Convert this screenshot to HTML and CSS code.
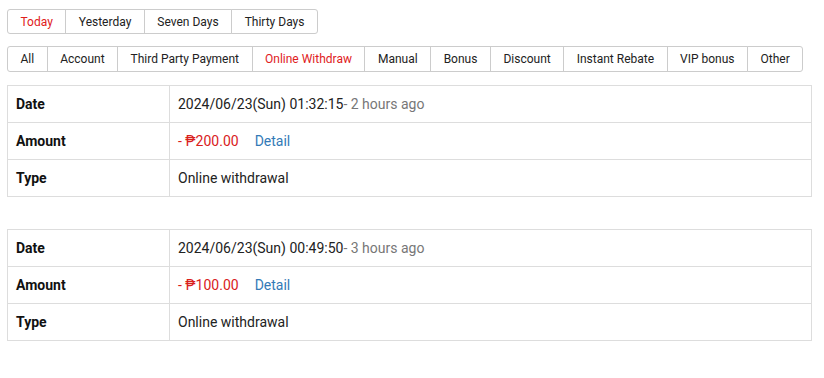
FILE: index.html
```html
<!DOCTYPE html>
<html lang="en">
<head>
    <meta charset="UTF-8">
    <meta name="viewport" content="width=device-width, initial-scale=1.0">
    <title>Transaction Records</title>
    <link rel="stylesheet" href="styles.css">
</head>
<body>

<div class="page">
    <div class="btn-group">
        <button class="active">Today</button>
        <button>Yesterday</button>
        <button>Seven Days</button>
        <button>Thirty Days</button>
    </div>

    <div class="btn-group types">
        <button>All</button>
        <button>Account</button>
        <button>Third Party Payment</button>
        <button class="active">Online Withdraw</button>
        <button>Manual</button>
        <button>Bonus</button>
        <button>Discount</button>
        <button>Instant Rebate</button>
        <button>VIP bonus</button>
        <button>Other</button>
    </div>

    <table class="record">
        <tr>
            <th>Date</th>
            <td>2024/06/23(Sun) 01:32:15<span class="ago">- 2 hours ago</span></td>
        </tr>
        <tr>
            <th>Amount</th>
            <td><span class="amount">- ₱200.00</span><a href="#" class="detail">Detail</a></td>
        </tr>
        <tr>
            <th>Type</th>
            <td>Online withdrawal</td>
        </tr>
    </table>

    <table class="record">
        <tr>
            <th>Date</th>
            <td>2024/06/23(Sun) 00:49:50<span class="ago">- 3 hours ago</span></td>
        </tr>
        <tr>
            <th>Amount</th>
            <td><span class="amount">- ₱100.00</span><a href="#" class="detail">Detail</a></td>
        </tr>
        <tr>
            <th>Type</th>
            <td>Online withdrawal</td>
        </tr>
    </table>
</div>

</body>
</html>
```

FILE: styles.css
```css
body {
    margin: 0;
    font-family: Roboto, "Liberation Sans", Arial, sans-serif;
    background: #fff;
    color: #222;
}
.page {
    padding: 9px 12px 0 7px;
}
.btn-group {
    display: flex;
}
.btn-group button {
    flex-shrink: 0;
    white-space: nowrap;
    height: 25px;
    padding: 0 12.5px;
    margin: 0 0 0 -1px;
    font-family: inherit;
    font-size: 12px;
    color: #222;
    background: #fff;
    border: 1px solid #ccc;
    border-radius: 0;
    cursor: pointer;
}
.btn-group button:first-child {
    margin-left: 0;
    border-radius: 3px 0 0 3px;
}
.btn-group button:last-child {
    border-radius: 0 3px 3px 0;
}
.btn-group button.active {
    color: #e0201c;
}
.types {
    margin-top: 12px;
}
.types button {
    height: 26px;
}
.record {
    width: 805px;
    border-collapse: collapse;
    margin-top: 13px;
    font-size: 14px;
}
.record + .record {
    margin-top: 32px;
}
.record th, .record td {
    border: 1px solid #ddd;
    padding: 8px;
    line-height: 20px;
    text-align: left;
}
.record th {
    width: 145px;
    font-weight: bold;
    color: #111;
}
.record td {
    color: #222;
}
.ago {
    color: #777;
}
.amount {
    color: #d9201c;
}
.detail {
    color: #337ab7;
    text-decoration: none;
    margin-left: 16px;
}
```
